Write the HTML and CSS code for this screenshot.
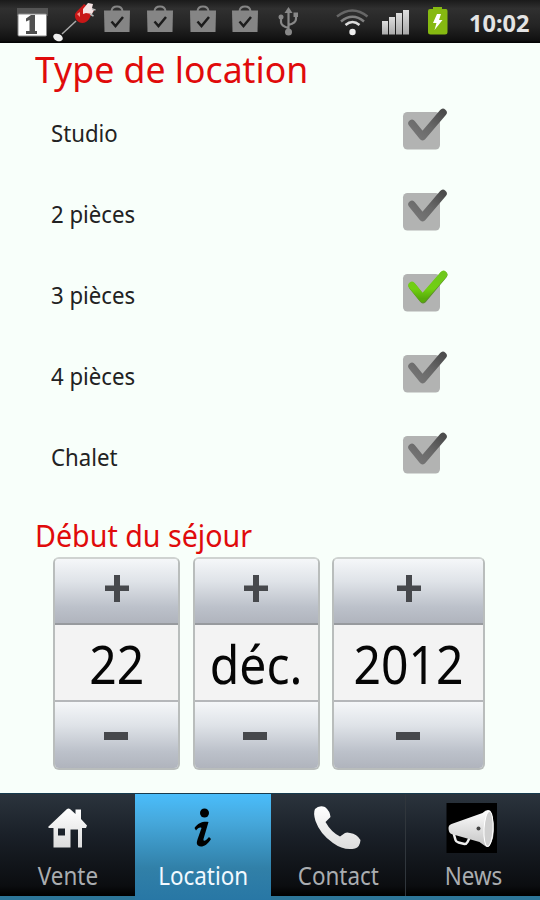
FILE: index.html
```
<!DOCTYPE html>
<html lang="fr">
<head>
<meta charset="utf-8">
<title>Location</title>
<link rel="stylesheet" href="styles.css">
</head>
<body>
<svg class="defs" width="0" height="0" aria-hidden="true">
  <defs>
    <linearGradient id="grey" x1="0" y1="1" x2="1" y2="0"><stop offset="0" stop-color="#777"/><stop offset=".5" stop-color="#686868"/><stop offset="1" stop-color="#4c4c4c"/></linearGradient>
    <linearGradient id="green" x1="0" y1="0" x2="0" y2="1"><stop offset="0" stop-color="#6fc71c"/><stop offset=".6" stop-color="#71d011"/><stop offset="1" stop-color="#57ab0a"/></linearGradient>
    <linearGradient id="white" x1="0" y1="0" x2="0" y2="1"><stop offset="0" stop-color="#fff"/><stop offset="1" stop-color="#dcdcdc"/></linearGradient>
    <linearGradient id="horn" x1="0" y1="0" x2="0" y2="1"><stop offset="0" stop-color="#fff"/><stop offset="1" stop-color="#c4c4c4"/></linearGradient>
    <linearGradient id="bars" x1="0" y1="0" x2="0" y2="1"><stop offset="0" stop-color="#ddd"/><stop offset="1" stop-color="#aaa"/></linearGradient>
    <symbol id="bag" viewBox="0 0 28 28">
      <path d="M8.500 6C9 2.500 11 1.500 14 1.500S19 2.500 19.500 6" fill="none" stroke="#858585" stroke-width="2"/>
      <path d="M1 5.500H27L26.500 27H1.500Z" fill="#858585"/>
      <path d="M8.500 16.500L12.500 21L20 12" fill="none" stroke="#1c1c1c" stroke-width="2.500"/>
    </symbol>
    <symbol id="box" viewBox="0 0 50 50">
      <rect x="3" y="9" width="37" height="37.500" rx="4.500" fill="#b2b3b2"/>
    </symbol>
  </defs>
</svg>
<header class="status">
  <svg class="status-left" width="310" height="42" viewBox="0 0 310 42">
    <rect x="17" y="8" width="31" height="8" fill="#555"/>
    <rect x="18" y="14" width="28.500" height="22" rx="1" fill="#fff" stroke="#888"/>
    <path d="M26 18.500L31 15H35V31H37V34H26V31H29.500V20L26 21.500Z" fill="#505050"/>
    <path d="M62 34L76 21" stroke="#aaa" stroke-width="1.500"/>
    <ellipse cx="58" cy="37.500" rx="5" ry="3.500" transform="rotate(25 58 37.500)" fill="#eee"/>
    <path d="M75 14C77 10 80 9 84 4L94 11C90 14 91 19 86 22C80 25 74 20 75 14Z" fill="#c81717"/>
    <path d="M83 9L88 3L93 4L92 8L94 10L92 14L86 13L83 14Z" fill="#f4e4e4"/>
    <path d="M92 9L95.500 10M90 14L93.500 16" stroke="#bbb" stroke-width="1.500"/>
    <path d="M77 14L80 12V17Z" fill="#ff8e83"/>
    <use href="#bag" x="103" y="5" width="28" height="28"/>
    <use href="#bag" x="146" y="5" width="28" height="28"/>
    <use href="#bag" x="189" y="5" width="28" height="28"/>
    <use href="#bag" x="231" y="5" width="28" height="28"/>
    <g fill="none" stroke="#888" stroke-width="2.200"><path d="M288.500 31V11M288.500 28Q281 26 281 22V17M288.500 25Q296 23 296 19V15"/></g>
    <g fill="#888"><path d="M284.500 13L288.500 7L292.500 13Z"/><circle cx="288.500" cy="32" r="3.500"/><circle cx="281" cy="17" r="2.500"/><path d="M293.500 12.500H298V17H293.500Z"/></g>
  </svg>
  <svg class="status-right" width="120" height="42" viewBox="330 0 120 42">
    <g fill="none" stroke-width="2.500">
      <path d="M337 16.500Q352.500 4.500 367.500 16.500" stroke="#666"/>
      <path d="M341 21.500Q352.500 12 364 21.500" stroke="#808080"/>
      <path d="M345.500 25Q352.500 19 359.500 25" stroke="#ddd"/>
    </g>
    <circle cx="352.500" cy="32" r="3.200" fill="#eee"/>
    <g fill="url(#bars)"><rect x="382" y="21" width="6" height="13.500"/><rect x="389" y="17" width="6" height="17.500"/><rect x="396" y="13" width="6" height="21.500"/><rect x="403" y="10" width="6" height="24.500"/></g>
    <path d="M433 7H442V9H446Q447.500 9 447.500 11V32Q447.500 34.500 445 34.500H430.500Q428 34.500 428 32V11Q428 9 430 9H433Z" fill="#86b911"/>
    <path d="M437 14H441L439 20H442.500L434.500 30L436.500 23H433Z" fill="#fff"/>
  </svg>
  <span class="clock">10:02</span>
</header>
<main>
  <h1><span>Type de location</span></h1>
  <ul class="types">
    <li><span>Studio</span><svg class="check" viewBox="0 0 50 50"><use href="#box"/><path d="M12 20.500L22.500 33.500L43 9.500" class="tick"/></svg></li>
    <li><span>2 pièces</span><svg class="check" viewBox="0 0 50 50"><use href="#box"/><path d="M12 20.500L22.500 33.500L43 9.500" class="tick"/></svg></li>
    <li><span>3 pièces</span><svg class="check" viewBox="0 0 50 50"><use href="#box"/><path d="M12.500 21.500L23 34.500L43.500 10" class="tick shade"/><path d="M12 20.500L22.500 33.500L43.500 9.500" class="tick on"/></svg></li>
    <li><span>4 pièces</span><svg class="check" viewBox="0 0 50 50"><use href="#box"/><path d="M12 20.500L22.500 33.500L43 9.500" class="tick"/></svg></li>
    <li><span>Chalet</span><svg class="check" viewBox="0 0 50 50"><use href="#box"/><path d="M12 20.500L22.500 33.500L43 9.500" class="tick"/></svg></li>
  </ul>
  <h2><span>Début du séjour</span></h2>
  <div class="pickers">
    <div class="picker">
      <div class="btn plus"><svg width="26" height="28" viewBox="0 0 26 28"><path d="M10 0H16V10.500H25V16H16V27H10V16H1V10.500H10Z"/></svg></div>
      <div class="value"><span>22</span></div>
      <div class="btn minus"><svg width="24" height="8" viewBox="0 0 24 8"><path d="M0 0H24V8H0Z"/></svg></div>
    </div>
    <div class="picker">
      <div class="btn plus"><svg width="26" height="28" viewBox="0 0 26 28"><path d="M10 0H16V10.500H25V16H16V27H10V16H1V10.500H10Z"/></svg></div>
      <div class="value"><span>déc.</span></div>
      <div class="btn minus"><svg width="24" height="8" viewBox="0 0 24 8"><path d="M0 0H24V8H0Z"/></svg></div>
    </div>
    <div class="picker">
      <div class="btn plus"><svg width="26" height="28" viewBox="0 0 26 28"><path d="M10 0H16V10.500H25V16H16V27H10V16H1V10.500H10Z"/></svg></div>
      <div class="value"><span>2012</span></div>
      <div class="btn minus"><svg width="24" height="8" viewBox="0 0 24 8"><path d="M0 0H24V8H0Z"/></svg></div>
    </div>
  </div>
</main>
<nav class="tabs">
  <div class="tab">
    <svg width="60" height="60" viewBox="38 798 60 60"><path fill="url(#white)" fill-rule="evenodd" d="M48 827L67 809Q68.500 808 70 809L75.500 814V809.500H81V819L87 825.500L86 828H82V847.500H78V829.500H70.500V847.500H53.500V828H49ZM58 828.500V835.500H65V828.500Z"/></svg>
    <span>Vente</span>
  </div>
  <div class="tab active">
    <svg width="60" height="60" viewBox="173 798 60 60"><circle cx="204.500" cy="813" r="4.500"/><path d="M194.500 828C198 822.500 204 821 208.500 822L203.500 839C203 842 206 841 209 837L211 839C207 846 201 848 198 845.500C196 843.500 197 841 198 838L201.500 828C200 827 198 828 196 830.500Z"/></svg>
    <span>Location</span>
  </div>
  <div class="tab">
    <svg width="60" height="60" viewBox="308 798 60 60"><path fill="url(#white)" d="M315 809Q319 805 325 807Q330 811 330.500 817L325.500 822Q331 832 340 836.500L345 833Q347 832 350 833Q357 834 360.500 840Q360 847 355 848.500Q344 851 333 843Q320 834 315.500 821Q313 813 315 809Z"/></svg>
    <span>Contact</span>
  </div>
  <div class="tab">
    <svg width="60" height="60" viewBox="443.500 798 60 60"><path d="M447 803H497.500V853H447Z"/><path d="M454 833L456 840Q456.500 842 459 842.500L465 844Q467 844 468 842L470 838" fill="none" stroke="#eee" stroke-width="2.500"/><path fill="url(#horn)" d="M449 828Q449 825 452 824L483 813Q488 808 491 811Q496 824 493.500 838Q491 846 487 847L480 842L452 834Q449 833 449 828Z"/><ellipse cx="489" cy="829" rx="4.500" ry="17.500" transform="rotate(3 489 829)" fill="#d0d0d0" stroke="#fff"/><circle cx="479" cy="828.500" r="2" fill="#444"/></svg>
    <span>News</span>
  </div>
</nav>
</body>
</html>
```
FILE: styles.css
```
* { box-sizing: border-box; }
body {
  margin: 0;
  width: 540px;
  height: 900px;
  overflow: hidden;
  display: flex;
  flex-direction: column;
  background: #f8fffa;
  color: #222;
  font-family: "Noto Sans", "Open Sans", sans-serif;
}
.defs { position: absolute; }
svg { display: block; flex: none; }
span { display: inline-block; white-space: nowrap; }
.status {
  height: 43px;
  flex: none;
  display: flex;
  background: linear-gradient(#1a1a1a, #303030 20%, #242424 60%, #101010 94%, #000);
}
.status-right { margin-left: 20px; }
.clock {
  margin-left: 19px;
  line-height: 46px;
  font-size: 23.500px;
  font-weight: 700;
  color: #e4e4e4;
}
main { height: 750px; flex: none; }
h1, h2 { margin: 0; padding-left: 35px; font-weight: 400; color: #e00b0b; }
h1 { height: 49px; font-size: 36.500px; line-height: 53px; }
h1 span { transform: scaleX(.976); transform-origin: left; }
.types { list-style: none; margin: 0; padding: 0 90px 0 51px; }
.types li { height: 81px; display: flex; justify-content: space-between; align-items: center; font-size: 24px; }
.types span { transform: scaleX(.925); transform-origin: left; }
.check { width: 50px; height: 50px; margin-bottom: 10px; }
.tick { fill: none; stroke: url(#grey); stroke-width: 7.500; stroke-linecap: round; stroke-linejoin: round; }
.tick.on { stroke: url(#green); }
.tick.shade { stroke: #5b8a2e; }
h2 { height: 60px; padding-top: 17px; font-size: 30px; line-height: 44px; }
h2 span { transform: scaleX(.955); transform-origin: left; }
.pickers { display: grid; grid-template-columns: 127px 127px 153px; column-gap: 12.500px; padding-left: 53px; }
.picker {
  height: 213px;
  border: 2px solid #b9bdbc;
  border-top-color: #cfd3d1;
  border-radius: 6px;
  overflow: hidden;
  display: flex;
  flex-direction: column;
}
.btn { background: linear-gradient(#f5f7f9, #dfe3e8 35%, #bcc1ca 75%, #b0b4bd); display: flex; justify-content: center; fill: #46484c; }
.plus { height: 66px; padding-top: 16px; border-bottom: 2px solid #979a9e; }
.value { height: 77px; background: #f3f3f3; border-bottom: 2px solid #b5b7ba; display: flex; justify-content: center; align-items: center; font-size: 52px; line-height: 75px; color: #050505; }
.value span { transform: translateY(1px) scaleX(.925); }
.minus { flex: 1; padding-top: 30px; }
.minus svg { margin-right: 2px; }
.tabs {
  height: 107px;
  flex: none;
  display: grid;
  grid-template-columns: 135px 136px 134px 135px;
  background: #2d7699;
  border-top: 1px solid #173b4e;
}
.tab {
  height: 102px;
  padding-top: 4px;
  display: flex;
  flex-direction: column;
  align-items: center;
  font-size: 24.500px;
  line-height: 34px;
  color: #aaadb0;
  background: linear-gradient(#2b343d, #1a2028 40%, #0b0d10 90%, #000);
}
.tab + .tab:last-child { border-left: 1px solid #30363c; }
.tab span { transform: scaleX(.915); margin-top: 1px; }
.tab.active { height: 106px; color: #f2f9ff; background: linear-gradient(#4abdfb, #46a9dd 25%, #3180a8 70%, #2877a5); }
```
